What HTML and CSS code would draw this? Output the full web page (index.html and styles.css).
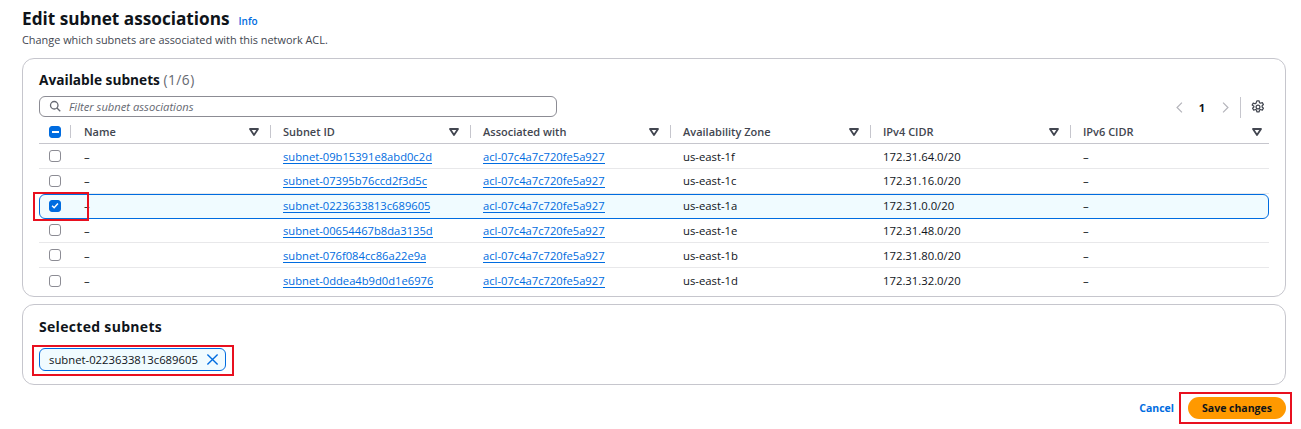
FILE: index.html
```html
<!DOCTYPE html>
<html lang="en">
<head>
<meta charset="utf-8">
<title>Edit subnet associations</title>
<link rel="stylesheet" href="styles.css">
</head>
<body>
<main class="page">
  <header class="head">
    <div class="title-row"><h1>Edit subnet associations</h1><a class="info">Info</a></div>
    <p class="desc">Change which subnets are associated with this network ACL.</p>
  </header>

  <section class="card table-card">
    <h2>Available subnets <span class="count">(1/6)</span></h2>
    <div class="tools">
      <div class="filter">
        <svg class="search" viewBox="0 0 16 16"><circle cx="7" cy="7" r="5"/><path d="M10.6 10.6 15 15"/></svg>
        <span>Filter subnet associations</span>
      </div>
      <div class="pager">
        <svg class="chev" viewBox="0 0 16 16"><path d="M11 2 5 8l6 6"/></svg>
        <b>1</b>
        <svg class="chev" viewBox="0 0 16 16"><path d="m5 2 6 6-6 6"/></svg>
        <i class="vsep"></i>
        <svg class="gear" viewBox="0 0 16 16"><circle cx="8" cy="8" r="2.2"/><path d="M6.7 1h2.6l.4 2 1.2.7 2-.7 1.300 2.200-1.500 1.400v1.400l1.500 1.400-1.300 2.200-2-.7-1.200.7-.4 2H6.700l-.4-2-1.200-.7-2 .7-1.300-2.200 1.500-1.400V7.200L1.300 5.800l1.300-2.200 2 .7 1.200-.7z"/></svg>
      </div>
    </div>

    <div class="grid">
      <div class="row hrow">
        <div class="c0"><span class="box on"><i class="dash"></i></span></div>
        <div class="th">Name<svg class="caret" viewBox="0 0 10 8"><path d="M1 1h8L5 7z"/></svg></div>
        <div class="th">Subnet ID<svg class="caret" viewBox="0 0 10 8"><path d="M1 1h8L5 7z"/></svg></div>
        <div class="th">Associated with<svg class="caret" viewBox="0 0 10 8"><path d="M1 1h8L5 7z"/></svg></div>
        <div class="th">Availability Zone<svg class="caret" viewBox="0 0 10 8"><path d="M1 1h8L5 7z"/></svg></div>
        <div class="th">IPv4 CIDR<svg class="caret" viewBox="0 0 10 8"><path d="M1 1h8L5 7z"/></svg></div>
        <div class="th">IPv6 CIDR<svg class="caret" viewBox="0 0 10 8"><path d="M1 1h8L5 7z"/></svg></div>
      </div>
      <div class="row">
        <div class="c0"><span class="box"></span></div><div class="td">–</div><div class="td"><a>subnet-09b15391e8abd0c2d</a></div><div class="td"><a>acl-07c4a7c720fe5a927</a></div><div class="td">us-east-1f</div><div class="td">172.31.64.0/20</div><div class="td">–</div>
      </div>
      <div class="row">
        <div class="c0"><span class="box"></span></div><div class="td">–</div><div class="td"><a>subnet-07395b76ccd2f3d5c</a></div><div class="td"><a>acl-07c4a7c720fe5a927</a></div><div class="td">us-east-1c</div><div class="td">172.31.16.0/20</div><div class="td">–</div>
      </div>
      <div class="row selected">
        <div class="c0"><span class="box on"><svg viewBox="0 0 12 12"><path d="m2.500 6.200 2.500 2.500 4.500-5"/></svg></span></div><div class="td">–</div><div class="td"><a>subnet-0223633813c689605</a></div><div class="td"><a>acl-07c4a7c720fe5a927</a></div><div class="td">us-east-1a</div><div class="td">172.31.0.0/20</div><div class="td">–</div>
      </div>
      <div class="row">
        <div class="c0"><span class="box"></span></div><div class="td">–</div><div class="td"><a>subnet-00654467b8da3135d</a></div><div class="td"><a>acl-07c4a7c720fe5a927</a></div><div class="td">us-east-1e</div><div class="td">172.31.48.0/20</div><div class="td">–</div>
      </div>
      <div class="row">
        <div class="c0"><span class="box"></span></div><div class="td">–</div><div class="td"><a>subnet-076f084cc86a22e9a</a></div><div class="td"><a>acl-07c4a7c720fe5a927</a></div><div class="td">us-east-1b</div><div class="td">172.31.80.0/20</div><div class="td">–</div>
      </div>
      <div class="row last">
        <div class="c0"><span class="box"></span></div><div class="td">–</div><div class="td"><a>subnet-0ddea4b9d0d1e6976</a></div><div class="td"><a>acl-07c4a7c720fe5a927</a></div><div class="td">us-east-1d</div><div class="td">172.31.32.0/20</div><div class="td">–</div>
      </div>
    </div>
  </section>

  <section class="card selected-card">
    <h2 class="sel-title">Selected subnets</h2>
    <div class="token">
      <span>subnet-0223633813c689605</span>
      <svg viewBox="0 0 14 14"><path d="M1.500 1.500 12.500 12.500M12.500 1.500 1.500 12.500"/></svg>
    </div>
  </section>

  <footer class="actions">
    <a class="cancel">Cancel</a>
    <button class="save" type="button">Save changes</button>
  </footer>
</main>
<div class="mark mark-check"></div>
<div class="mark mark-token"></div>
<div class="mark mark-save"></div>
</body>
</html>
```
FILE: styles.css
```css
* { box-sizing: border-box; }
html, body { margin: 0; background: #fff; }
body {
  width: 1301px; height: 429px; overflow: hidden; position: relative;
  font-family: "Open Sans", "Noto Sans", sans-serif;
  font-size: 11px; color: #0f141a;
}
.page { padding: 8px 15px 0 22px; }
a { color: #006ce0; }

.title-row { display: flex; align-items: baseline; gap: 9px; height: 22px; }
h1 { margin: 0; font-size: 17.2px; line-height: 22px; font-weight: 700; color: #0f141a; }
.info { font-size: 10px; font-weight: 600; }
.desc { margin: 2px 0 0; font-size: 10.9px; line-height: 15px; color: #424650; }

.card { border: 1px solid #c6c6cd; border-radius: 12px; background: #fff; }
.table-card { margin-top: 11px; height: 239px; padding: 12px 16px 0; }
h2 { margin: 0; font-size: 13.7px; line-height: 18px; font-weight: 700; }
.count { font-weight: 400; color: #656871; letter-spacing: .5px; }
.sel-title { font-size: 14px; letter-spacing: .31px; }

.tools { display: flex; justify-content: space-between; align-items: center; height: 24px; margin-top: 5px; }
.filter {
  width: 518px; height: 21px; border: 1px solid #8c8c94; border-radius: 6px;
  display: flex; align-items: center; gap: 8px; padding-left: 9px;
  font-style: italic; color: #656871; font-size: 11.2px;
}
.search { width: 12px; height: 12px; fill: none; stroke: #656871; stroke-width: 1.700; }
.pager { display: flex; align-items: center; font-size: 11px; height: 24px; padding-top: 2px; }
.chev { width: 13px; height: 13px; fill: none; stroke: #b4b4bb; stroke-width: 1.500; }
.pager b { margin: 0 14px 0 13px; font-weight: 700; }
.vsep { width: 1px; height: 21px; background: #c6c6cd; margin: 0 10px 0 8px; }
.gear { width: 14px; height: 14px; fill: none; stroke: #424650; stroke-width: 1.400; stroke-linejoin: round; margin-right: 4px; }

.row {
  display: grid; grid-template-columns: 45px 199px 200px 200px 200px 200px 186px;
  height: 24.800px; border-bottom: 1px solid #e8e8ea; align-items: center;
}
.hrow { height: 21px; margin-top: 5px; border-bottom: 1px solid #c6c6cd; }
.row.last { border-bottom: 0; }
.c0 { padding-left: 10px; display: flex; height: 100%; align-items: center; position: relative; }
.hrow .c0 { padding-bottom: 3px; }
.hrow .c0::after { content: ""; position: absolute; left: 31px; top: 2px; bottom: 5px; width: 1px; background: #c6c6cd; }
.box {
  width: 12px; height: 12px; border: 1px solid #8c8c94; border-radius: 3px; background: #fff;
  display: flex; align-items: center; justify-content: center;
}
.box.on { background: #006ce0; border-color: #006ce0; }
.box svg { width: 11px; height: 11px; fill: none; stroke: #fff; stroke-width: 1.800; }
.dash { width: 7px; height: 2px; background: #fff; }

.th {
  position: relative; display: flex; justify-content: space-between; align-items: center;
  height: 100%; padding-right: 24px; padding-bottom: 3px;
  font-size: 11px; font-weight: 600; color: #424650;
}
.th::after { content: ""; position: absolute; right: 12px; top: 2px; bottom: 5px; width: 1px; background: #c6c6cd; }
.th:last-child::after { display: none; }
.th:last-child { padding-right: 7px; }
.caret { width: 10px; height: 8px; fill: none; stroke: #424650; stroke-width: 1.800; stroke-linejoin: round; }
.td { font-size: 11.3px; color: #0f141a; white-space: nowrap; padding-top: .4px; }
.td a { border-bottom: 1px solid #006ce0; font-size: 11.2px; line-height: 13px; display: inline-block; }

.row.selected {
  grid-template-columns: 44px 199px 200px 200px 200px 200px 185px;
  background: #f0fbff; border: 1px solid #006ce0; border-radius: 6px; height: 25px;
}
.row.selected .c0 { padding-left: 9px; padding-bottom: 1px; }
.row.selected .td { padding-top: 0; padding-bottom: 1px; }

.selected-card { margin-top: 7px; height: 81px; padding: 13px 16px 0; }
.token {
  display: flex; align-items: center; justify-content: space-between; margin-top: 12px;
  height: 23px; padding: 0 6px 0 9px; width: 187px;
  border: 1px solid #006ce0; border-radius: 6px; background: #f0fbff; font-size: 11.3px;
}
.token svg { width: 13px; height: 13px; fill: none; stroke: #006ce0; stroke-width: 1.500; }

.actions { display: flex; justify-content: flex-end; align-items: center; gap: 14px; margin-top: 12px; }
.cancel { font-size: 10.5px; font-weight: 700; }
.save {
  width: 98px; height: 22px; border: 0; border-radius: 11px; background: #ff9900;
  font: 700 10.5px "Open Sans", "Noto Sans", sans-serif; color: #0f141a; padding: 0;
}

.mark { position: absolute; border: 2px solid #e8101f; pointer-events: none; }
.mark-check { left: 33px; top: 192px; width: 56px; height: 29px; }
.mark-token { left: 32px; top: 345px; width: 202px; height: 31px; }
.mark-save { left: 1179px; top: 392px; width: 113px; height: 32px; }
```
